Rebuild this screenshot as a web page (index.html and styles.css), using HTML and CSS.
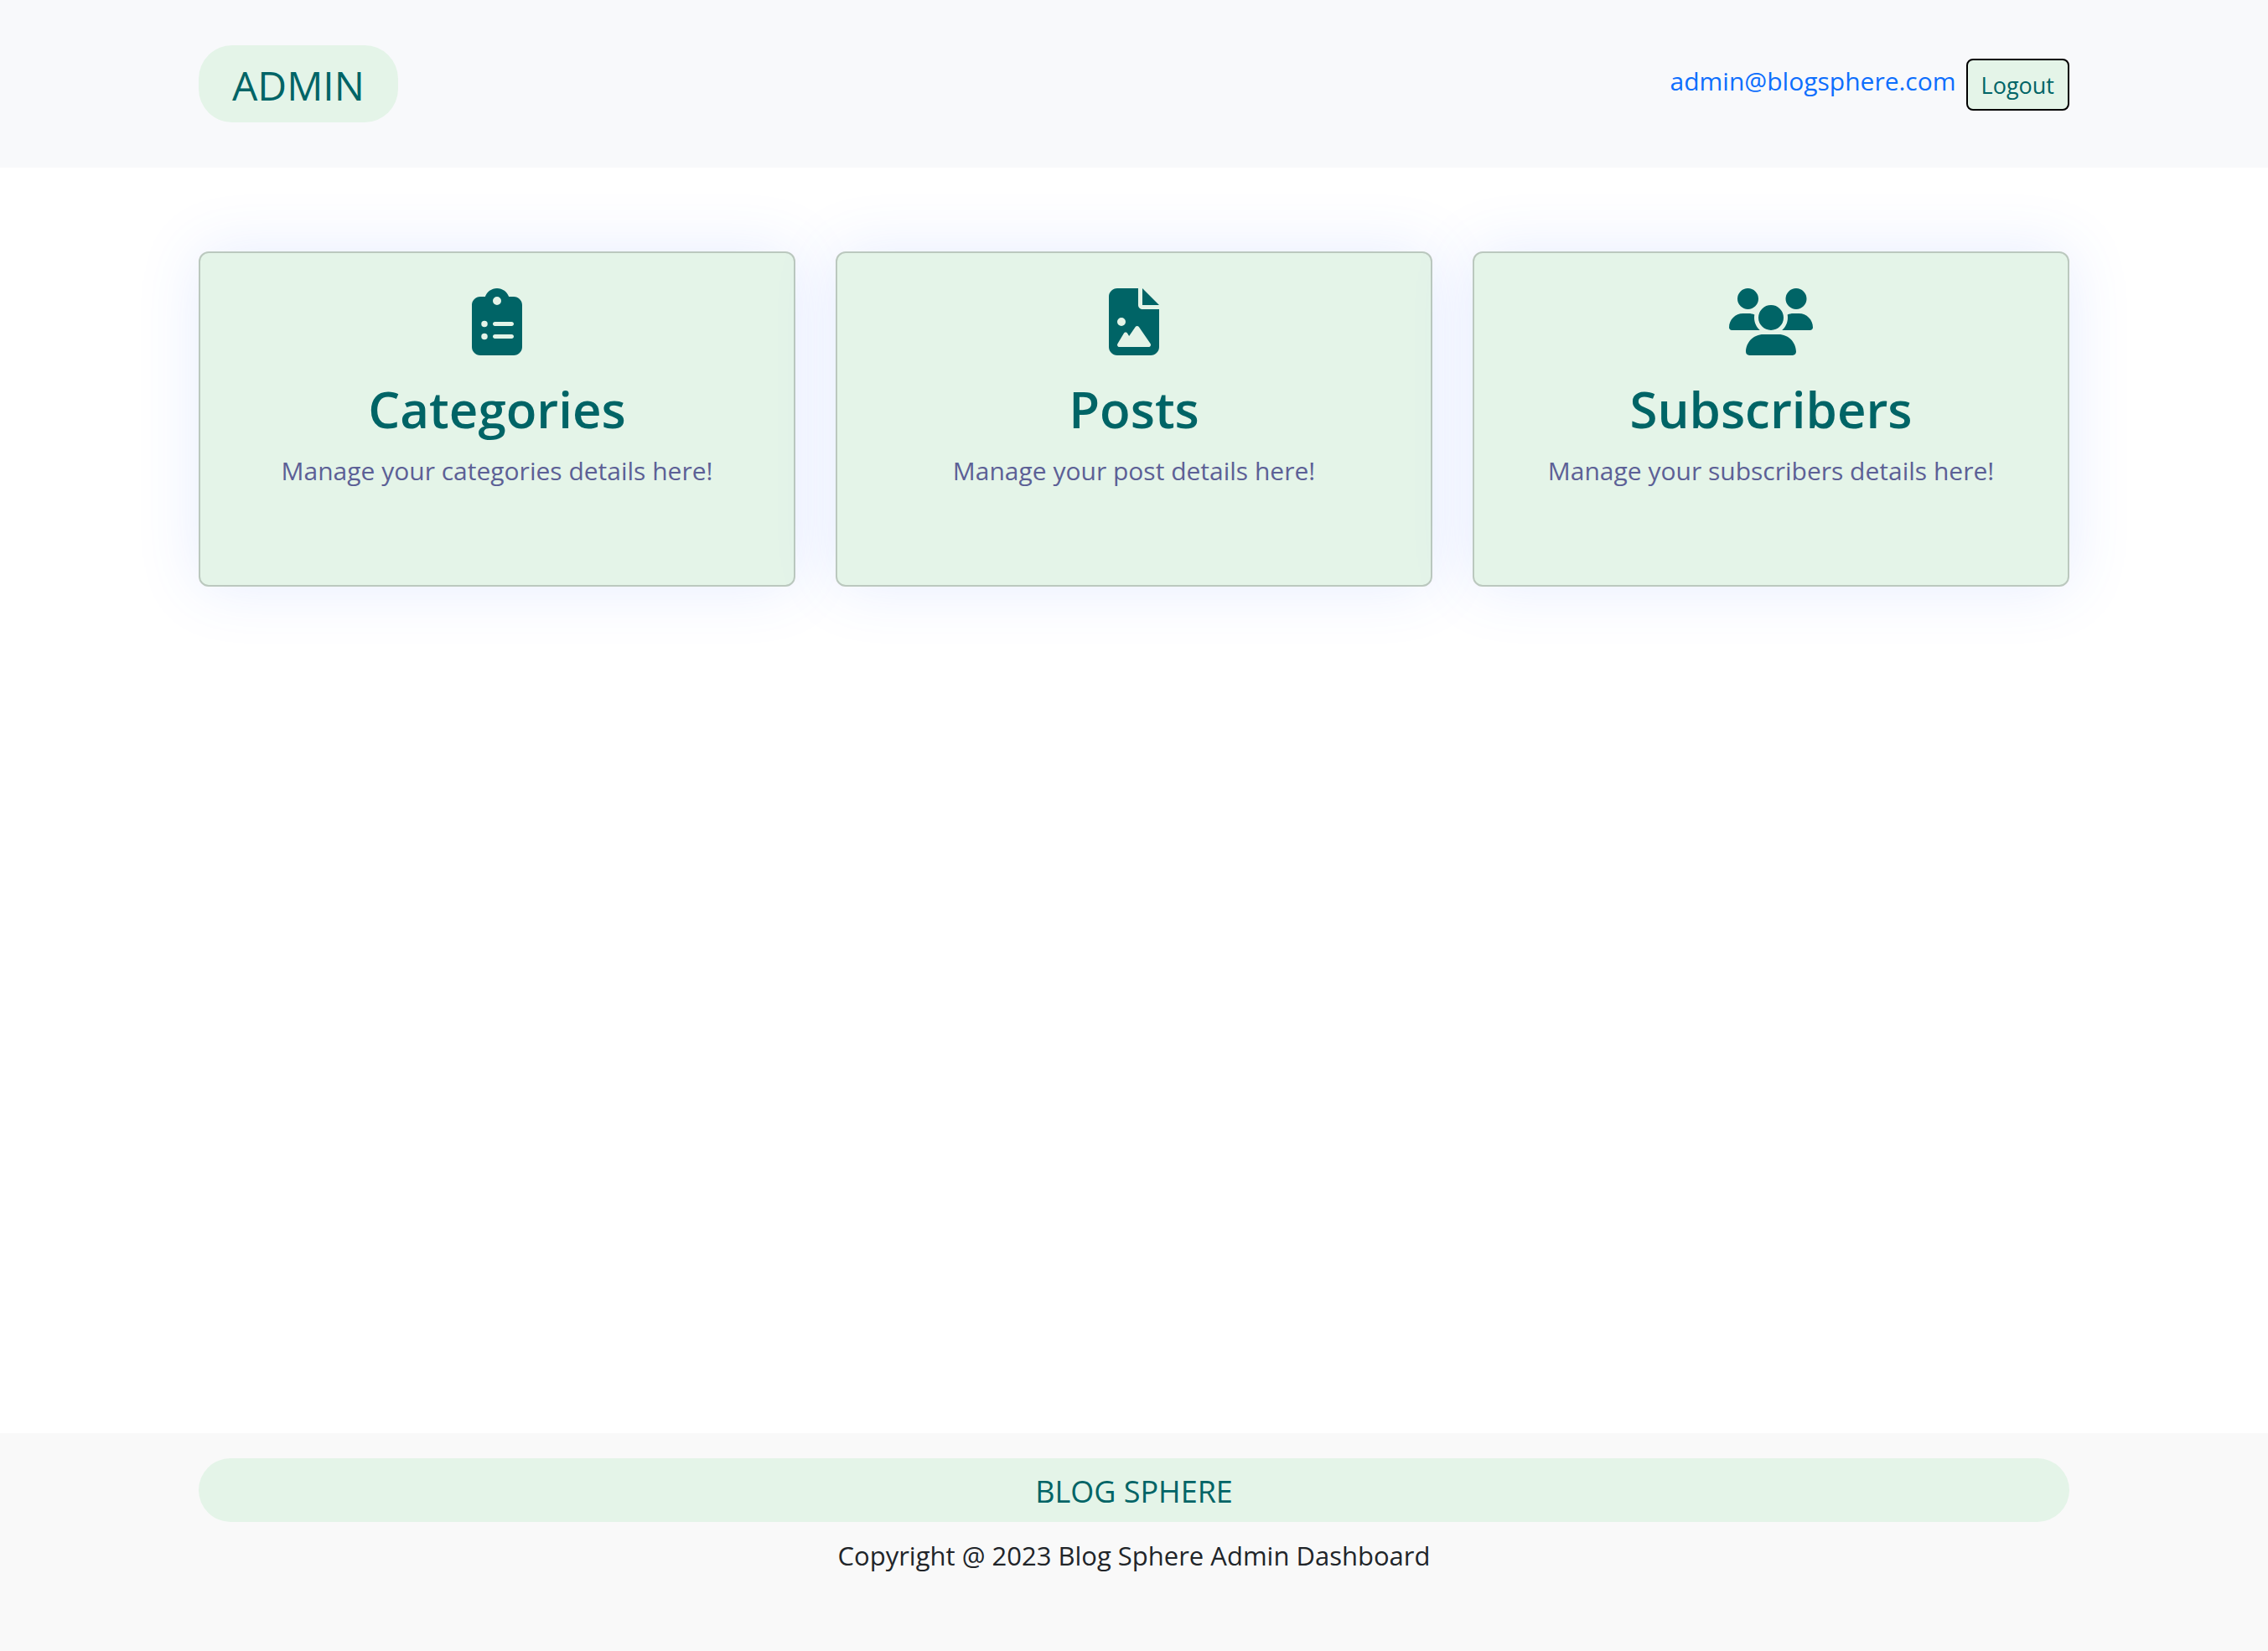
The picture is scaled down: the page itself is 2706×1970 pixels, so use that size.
FILE: index.html
```html
<!DOCTYPE html>
<html lang="en">
<head>
<meta charset="utf-8">
<title>Blog Sphere Admin</title>
<link rel="stylesheet" href="styles.css">
</head>
<body>
<header class="site-header">
  <div class="container header-row">
    <span class="brand">ADMIN</span>
    <div class="account">
      <a class="account-email" href="#">admin@blogsphere.com</a>
      <button class="logout" type="button">Logout</button>
    </div>
  </div>
</header>
<main class="container cards">
  <section class="card">
    <svg class="card-icon" viewBox="0 0 384 512" aria-hidden="true"><path d="M192 0c-41.8 0-77.4 26.7-90.5 64H64C28.7 64 0 92.7 0 128V448c0 35.3 28.7 64 64 64H320c35.3 0 64-28.7 64-64V128c0-35.3-28.7-64-64-64H282.5C269.4 26.7 233.8 0 192 0zm0 64a32 32 0 1 1 0 64 32 32 0 1 1 0-64zM72 272a24 24 0 1 1 48 0 24 24 0 1 1 -48 0zm104-16H304c8.800 0 16 7.200 16 16s-7.200 16-16 16H176c-8.800 0-16-7.200-16-16s7.200-16 16-16zM72 368a24 24 0 1 1 48 0 24 24 0 1 1 -48 0zm88 0c0-8.800 7.200-16 16-16H304c8.800 0 16 7.200 16 16s-7.200 16-16 16H176c-8.800 0-16-7.200-16-16z"/></svg>
    <h2 class="card-title">Categories</h2>
    <p class="card-text">Manage your categories details here!</p>
  </section>
  <section class="card">
    <svg class="card-icon" viewBox="0 0 384 512" aria-hidden="true"><path d="M64 0C28.7 0 0 28.7 0 64V448c0 35.3 28.7 64 64 64H320c35.3 0 64-28.7 64-64V160H256c-17.7 0-32-14.3-32-32V0H64zM256 0V128H384L256 0zM64 256a32 32 0 1 1 64 0 32 32 0 1 1 -64 0zm152 32c5.300 0 10.200 2.600 13.200 6.900l88 128c3.400 4.900 3.700 11.300 1 16.500s-8.200 8.600-14.200 8.600H216 176 128 80c-5.800 0-11.100-3.100-13.900-8.100s-2.800-11.200 .2-16.100l48-80c2.900-4.800 8.100-7.800 13.700-7.800s10.800 2.900 13.700 7.800l12.800 21.400 48.300-70.200c3-4.300 7.900-6.900 13.200-6.900z"/></svg>
    <h2 class="card-title">Posts</h2>
    <p class="card-text">Manage your post details here!</p>
  </section>
  <section class="card">
    <svg class="card-icon" viewBox="0 0 640 512" aria-hidden="true"><path d="M144 0a80 80 0 1 1 0 160A80 80 0 1 1 144 0zM512 0a80 80 0 1 1 0 160A80 80 0 1 1 512 0zM0 298.7C0 239.8 47.8 192 106.7 192h42.7c15.9 0 31 3.5 44.6 9.7c-1.3 7.2-1.9 14.7-1.9 22.3c0 38.2 16.8 72.5 43.3 96c-.2 0-.4 0-.7 0H21.3C9.6 320 0 310.4 0 298.7zM405.3 320c-.2 0-.4 0-.7 0c26.6-23.5 43.3-57.8 43.3-96c0-7.6-.7-15-1.9-22.3c13.6-6.3 28.7-9.7 44.6-9.7h42.7C592.2 192 640 239.8 640 298.7c0 11.8-9.6 21.3-21.3 21.3H405.3zM224 224a96 96 0 1 1 192 0 96 96 0 1 1 -192 0zM128 485.3C128 411.7 187.7 352 261.3 352H378.7C452.3 352 512 411.7 512 485.3c0 14.7-11.9 26.7-26.7 26.7H154.7c-14.7 0-26.7-11.9-26.7-26.7z"/></svg>
    <h2 class="card-title">Subscribers</h2>
    <p class="card-text">Manage your subscribers details here!</p>
  </section>
</main>
<footer class="site-footer">
  <div class="container">
    <div class="footer-brand">BLOG SPHERE</div>
    <p class="copyright">Copyright @ 2023 Blog Sphere Admin Dashboard</p>
  </div>
</footer>
</body>
</html>
```
FILE: styles.css
```css
*, *::before, *::after { box-sizing: border-box; }

body {
  margin: 0;
  min-height: 100vh;
  display: flex;
  flex-direction: column;
  background: #fff;
  color: #212529;
  font-family: "Open Sans", "Noto Sans", sans-serif;
  font-size: 31px;
  line-height: 48px;
}

.container {
  width: 100%;
  max-width: 2280px;
  margin: 0 auto;
  padding: 0 24px;
}

.site-header {
  padding: 54px 0;
  background: #f8f9fb;
}

.header-row {
  display: flex;
  justify-content: space-between;
  align-items: center;
}

.brand {
  padding: 12px 40px 8px;
  border-radius: 40px;
  background: #e4f4e8;
  color: #006466;
  font-size: 48px;
  line-height: 72px;
}

.account {
  display: flex;
  align-items: center;
  gap: 12px;
  padding-top: 2px;
}

.account-email {
  padding-bottom: 8px;
  color: #0d6efd;
  font-size: 30px;
  text-decoration: none;
}

.logout {
  padding: 9px 16px 7px;
  border: 2px solid #000;
  border-radius: 8px;
  background: #e4f4e8;
  color: #006466;
  font: inherit;
  font-size: 27px;
  line-height: 42px;
}

.cards {
  flex: 1;
  display: grid;
  grid-template-columns: repeat(3, 1fr);
  align-items: start;
  gap: 48px;
  padding-top: 100px;
}

.card {
  min-height: 400px;
  padding: 42px 32px;
  border: 2px solid #bbc8be;
  border-radius: 12px;
  background: #e4f4e8;
  box-shadow: 0 0 76px rgba(65, 105, 255, .13);
  text-align: center;
}

.card-icon {
  display: block;
  height: 80px;
  margin: 0 auto 26px;
  fill: #006466;
}

.card-title {
  margin: 0;
  color: #006466;
  font-size: 60px;
  font-weight: 600;
  line-height: 76px;
}

.card-text {
  margin: 12px 0 0;
  color: #5c6096;
  font-size: 30px;
}

.site-footer {
  padding: 30px 0 90px;
  background: #f9f9f9;
  text-align: center;
}

.footer-brand {
  padding: 10px 40px 6px;
  border-radius: 40px;
  background: #e4f4e8;
  color: #006466;
  font-size: 36px;
  line-height: 60px;
}

.copyright { margin: 16px 0 0; }
```
